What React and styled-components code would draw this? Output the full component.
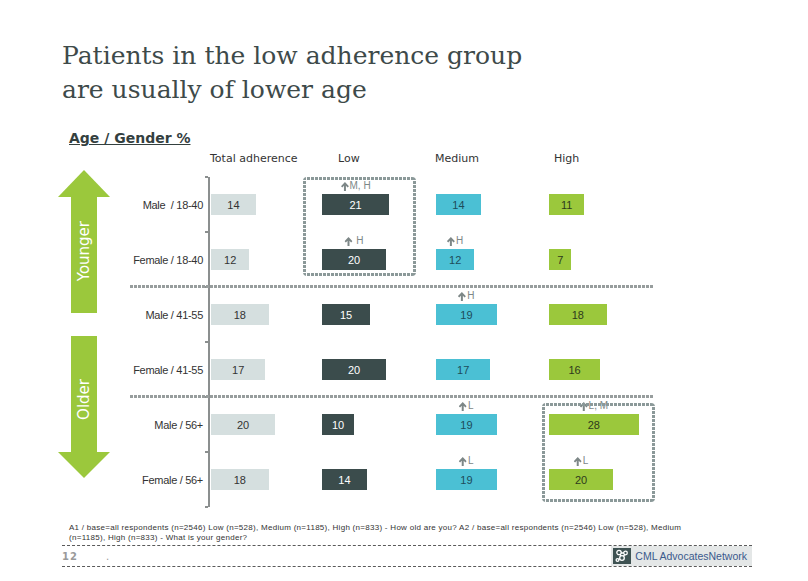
import React from "react";
import styled, { createGlobalStyle } from "styled-components";

const GREEN = "#9bc83c";
const UNIT = 3.2;

const columns = [
  { key: "total", title: "Total adherence", width: 92, pad: 1, head: 2, kind: "light" },
  { key: "low", title: "Low", width: 114, pad: 22, head: 38, kind: "dark" },
  { key: "medium", title: "Medium", width: 126, pad: 22, head: 21, kind: "cyan" },
  { key: "high", title: "High", width: 113, pad: 9, head: 14, kind: "green" },
];

const groups = [
  {
    box: { left: 173, top: 0 },
    rows: [
      { label: "Male  / 18-40", values: [14, 21, 14, 11], notes: [null, "M, H", null, null] },
      { label: "Female / 18-40", values: [12, 20, 12, 7], notes: [null, " H", "H", null] },
    ],
  },
  {
    rows: [
      { label: "Male / 41-55", values: [18, 15, 19, 18], notes: [null, null, "H", null] },
      { label: "Female / 41-55", values: [17, 20, 17, 16], notes: [] },
    ],
  },
  {
    box: { left: 412, top: 6 },
    rows: [
      { label: "Male / 56+", values: [20, 10, 19, 28], notes: [null, null, "L", "L, M"] },
      { label: "Female / 56+", values: [18, 14, 19, 20], notes: [null, null, "L", "L"] },
    ],
  },
];

const GlobalStyle = createGlobalStyle`
  body {
    margin: 0;
    background: #fff;
    font-family: "Liberation Sans", Arial, sans-serif;
  }
`;

const UpArrowIcon = () => (
  <svg width="8" height="9" viewBox="0 0 8 9">
    <path d="M4 0 L8 4.2 L6.6 5.4 L5 3.8 V9 H3 V3.8 L1.4 5.4 L0 4.2 Z" fill="#7d8787" />
  </svg>
);

const LogoIcon = () => (
  <svg width="18" height="16" viewBox="0 0 18 16">
    <rect width="18" height="16" fill="#3e5252" />
    <g fill="none" stroke="#fff" strokeWidth="1.3">
      <circle cx="6" cy="4.5" r="2.2" />
      <circle cx="12.5" cy="5" r="1.8" />
      <circle cx="9" cy="10" r="2.3" />
      <circle cx="4.5" cy="12" r="1.4" />
      <path d="M8 5 L10.8 5 M7 6.4 L8 8 M10.5 8.2 L11.8 6.6 M6.8 10.8 L5.7 11.4" />
    </g>
  </svg>
);

const App = () => (
  <Page>
    <GlobalStyle />
    <Title>
      Patients in the low adherence group
      <br />
      are usually of lower age
    </Title>
    <SubTitle>Age / Gender %</SubTitle>
    <Chart>
      <ArrowColumn>
        <UpHead />
        <Shaft>
          <ShaftLabel>Younger</ShaftLabel>
        </Shaft>
        <Shaft $gap>
          <ShaftLabel>Older</ShaftLabel>
        </Shaft>
        <DownHead />
      </ArrowColumn>
      <Table>
        <HeaderRow>
          <span />
          {columns.map(c => (
            <HeaderCell key={c.key} $pad={c.head}>
              {c.title}
            </HeaderCell>
          ))}
        </HeaderRow>
        {groups.map((g, gi) => (
          <React.Fragment key={gi}>
            {gi > 0 && <Separator />}
            <Group>
              {g.rows.map((r, ri) => (
                <Row key={r.label}>
                  <Label>{r.label}</Label>
                  {columns.map((c, ci) => (
                    <Cell
                      key={c.key}
                      $pad={c.pad}
                      $axis={ci === 0}
                      $last={gi === groups.length - 1 && ri === g.rows.length - 1}
                    >
                      <Bar $kind={c.kind} style={{ width: r.values[ci] * UNIT }}>
                        {r.notes[ci] && (
                          <Note>
                            <UpArrowIcon />
                            <span>{r.notes[ci]}</span>
                          </Note>
                        )}
                        {r.values[ci]}
                      </Bar>
                    </Cell>
                  ))}
                </Row>
              ))}
              {g.box && <Highlight $left={g.box.left} $top={g.box.top} />}
            </Group>
          </React.Fragment>
        ))}
      </Table>
    </Chart>
    <Footnote>
      A1 / base=all respondents (n=2546) Low (n=528), Medium (n=1185), High (n=833) - How old are you? A2 /
      base=all respondents (n=2546) Low (n=528), Medium (n=1185), High (n=833) - What is your gender?
    </Footnote>
    <Footer>
      <PageNum>
        12<Dot>.</Dot>
      </PageNum>
      <Logo>
        <LogoIcon />
        <LogoText>CML AdvocatesNetwork</LogoText>
      </Logo>
    </Footer>
  </Page>
);

export default App;

const Page = styled.div`
  width: 808px;
  height: 581px;
  overflow: hidden;
  background: #fff;
`;

const Title = styled.h1`
  margin: 0;
  padding: 39px 0 0 62px;
  font-family: "DejaVu Serif", "Liberation Serif", serif;
  font-weight: normal;
  font-size: 25px;
  line-height: 34px;
  color: #3e4a4a;
`;

const SubTitle = styled.div`
  margin: 23px 0 0 69px;
  font-family: "DejaVu Sans", sans-serif;
  font-weight: bold;
  font-size: 14px;
  line-height: 16px;
  color: #34403f;
  text-decoration: underline;
`;

const Chart = styled.div`
  display: flex;
  margin-top: 1px;
`;

const ArrowColumn = styled.div`
  margin-left: 58px;
  width: 52px;
  padding-top: 23px;
  display: flex;
  flex-direction: column;
  align-items: center;
`;

const UpHead = styled.div`
  width: 52px;
  height: 27px;
  background: ${GREEN};
  clip-path: polygon(50% 0, 100% 100%, 0 100%);
`;

const DownHead = styled.div`
  width: 52px;
  height: 26px;
  background: ${GREEN};
  clip-path: polygon(0 0, 100% 0, 50% 100%);
`;

const Shaft = styled.div`
  box-sizing: border-box;
  width: 26px;
  height: 116px;
  margin-top: ${p => (p.$gap ? "23px" : "0")};
  background: ${GREEN};
  display: flex;
  flex-direction: column;
  justify-content: flex-end;
  align-items: center;
  padding-bottom: 32px;
`;

const ShaftLabel = styled.span`
  writing-mode: vertical-rl;
  transform: rotate(180deg);
  color: #fff;
  font-family: "DejaVu Sans", sans-serif;
  font-size: 15px;
  line-height: 1;
`;

const Table = styled.div`
  margin-left: 20px;
  width: 525px;
`;

const gridCols = columns.map(c => `${c.width}px`).join(" ");

const HeaderRow = styled.div`
  display: grid;
  grid-template-columns: 78px ${gridCols};
  height: 30px;
`;

const HeaderCell = styled.div`
  padding: 5px 0 0 ${p => p.$pad}px;
  font-family: "DejaVu Sans", sans-serif;
  font-size: 11px;
  line-height: 13px;
  color: #333;
  white-space: nowrap;
`;

const Group = styled.div`
  position: relative;
`;

const Row = styled.div`
  display: grid;
  grid-template-columns: 78px ${gridCols};
  height: 55px;
`;

const Label = styled.div`
  display: flex;
  align-items: center;
  justify-content: flex-end;
  padding-right: 5px;
  font-size: 11px;
  letter-spacing: -0.3px;
  color: #333;
  white-space: pre;
`;

const Cell = styled.div`
  position: relative;
  display: flex;
  align-items: center;
  padding-left: ${p => p.$pad}px;
  border-left: ${p => (p.$axis ? "2px solid #8b8f8f" : "none")};

  &::before,
  &::after {
    content: "";
    display: ${p => (p.$axis ? "block" : "none")};
    position: absolute;
    left: -5px;
    width: 3px;
    height: 2px;
    background: #8b8f8f;
  }
  &::before {
    top: -1px;
  }
  &::after {
    display: ${p => (p.$axis && p.$last ? "block" : "none")};
    bottom: -1px;
  }
`;

const barColors = {
  light: { bg: "#d5dfdf", fg: "#333" },
  dark: { bg: "#3b4c4c", fg: "#fff" },
  cyan: { bg: "#4bc0d4", fg: "#1e4c5a" },
  green: { bg: "#9bc83c", fg: "#2e3a1c" },
};

const Bar = styled.div`
  position: relative;
  height: 21px;
  display: flex;
  align-items: center;
  justify-content: center;
  background: ${p => barColors[p.$kind].bg};
  color: ${p => barColors[p.$kind].fg};
  font-size: 11px;
`;

const Note = styled.div`
  position: absolute;
  bottom: calc(100% + 3px);
  left: 50%;
  transform: translateX(-50%);
  display: flex;
  align-items: center;
  gap: 1px;
  white-space: pre;
  font-size: 10px;
  line-height: 10px;
  color: #7d8787;
`;

const dash = (dir, color) =>
  `repeating-linear-gradient(${dir}, ${color} 0 3px, transparent 3px 4px)`;

const Separator = styled.div`
  position: relative;
  z-index: 1;
  width: 523px;
  height: 3px;
  margin: -2px 0 -1px;
  background: ${dash("90deg", "#979d9d")};
`;

const Highlight = styled.div`
  position: absolute;
  left: ${p => p.$left}px;
  top: ${p => p.$top}px;
  width: 113px;
  height: 99px;
  border-radius: 4px;
  background:
    ${dash("90deg", "#8b9999")} top / 100% 3px no-repeat,
    ${dash("90deg", "#8b9999")} bottom / 100% 3px no-repeat,
    ${dash("180deg", "#8b9999")} left / 3px 100% no-repeat,
    ${dash("180deg", "#8b9999")} right / 3px 100% no-repeat;
`;

const Footnote = styled.div`
  margin: 16px 0 0 69px;
  width: 630px;
  font-size: 8px;
  line-height: 10px;
  letter-spacing: 0.28px;
  color: #333;
`;

const Footer = styled.div`
  margin: 2px 0 0 62px;
  width: 690px;
  height: 20px;
  border-top: 1px dashed #5a5a5a;
  border-bottom: 1px dashed #5a5a5a;
  display: flex;
  align-items: center;
  justify-content: space-between;
`;

const PageNum = styled.div`
  font-family: "DejaVu Sans", sans-serif;
  font-weight: bold;
  font-size: 10px;
  letter-spacing: 1px;
  color: #9a9a9a;
`;

const Dot = styled.span`
  margin-left: 28px;
  font-weight: normal;
`;

const Logo = styled.div`
  height: 100%;
  display: flex;
  align-items: center;
  gap: 4px;
  padding: 0 5px 0 2px;
  background: #e4e7e7;
`;

const LogoText = styled.span`
  font-size: 10.5px;
  color: #3b5a8c;
`;
